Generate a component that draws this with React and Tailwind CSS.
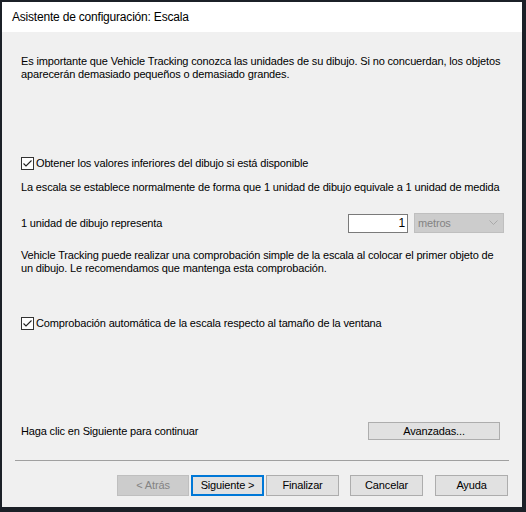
import React from "react";

function CheckBox({ label }) {
  return (
    <div className="flex items-center h-[13px]">
      <span className="w-[13px] h-[13px] border border-[#333333] bg-white flex items-center justify-center shrink-0">
        <svg width="11" height="11" viewBox="0 0 11 11">
          <path d="M1.5 5.5 L4 8 L9.5 2.5" fill="none" stroke="#222222" strokeWidth="1.1" />
        </svg>
      </span>
      <span className="ml-[2px]">{label}</span>
    </div>
  );
}

function Btn({ children, variant = "normal", className = "" }) {
  const styles = {
    normal: "bg-[#e1e1e1] border border-[#adadad] text-black",
    primary: "bg-[#e1e1e1] border-2 border-[#0078d7] text-black",
    disabled: "bg-[#cccccc] border border-[#bfbfbf] text-[#838383]",
  };
  return (
    <div className={`shrink-0 flex items-center justify-center ${styles[variant]} ${className}`}>
      {children}
    </div>
  );
}

export default function App() {
  return (
    <div className="w-[526px] h-[512px] bg-[#1b2027] pl-[2px] pt-[2px] overflow-hidden font-['Liberation_Sans',Arial,sans-serif] text-[11px] tracking-[-0.15px] leading-[13px] text-black whitespace-nowrap">
      <div className="w-[520px] h-[505px] bg-[#f0f0f0] flex flex-col">
        {/* title bar */}
        <div className="shrink-0 h-[30px] bg-white flex items-center pl-[10px] text-[12px] tracking-[-0.2px] text-black">
          Asistente de configuración: Escala
        </div>

        <div className="shrink-0 flex flex-col pl-[19px] pr-[14px] pt-[23px]">
          <p>
            Es importante que Vehicle Tracking conozca las unidades de su dibujo. Si no concuerdan, los objetos
            <br />
            aparecerán demasiado pequeños o demasiado grandes.
          </p>

          <div className="mt-[76px]">
            <CheckBox label="Obtener los valores inferiores del dibujo si está disponible" />
          </div>

          <p className="mt-[11px]">
            La escala se establece normalmente de forma que 1 unidad de dibujo equivale a 1 unidad de medida
          </p>

          <div className="mt-[19px] h-[20px] pr-[4px] flex items-center">
            <span className="flex-1">1 unidad de dibujo representa</span>
            <div className="w-[60px] h-[19px] border border-[#7a7a7a] bg-white flex items-center justify-end pr-[2px] text-[12px]">
              1
            </div>
            <div className="ml-[6px] w-[90px] h-[20px] border border-[#bfbfbf] bg-[#cccccc] flex items-center justify-between pl-[3px] pr-[5px] text-[#838383]">
              <span>metros</span>
              <svg width="9" height="6" viewBox="0 0 9 6">
                <path d="M0.5 0.5 L4.5 4.5 L8.5 0.5" fill="none" stroke="#a9a9a9" strokeWidth="1" />
              </svg>
            </div>
          </div>

          <p className="mt-[16px]">
            Vehicle Tracking puede realizar una comprobación simple de la escala al colocar el primer objeto de
            <br />
            un dibujo. Le recomendamos que mantenga esta comprobación.
          </p>

          <div className="mt-[42px]">
            <CheckBox label="Comprobación automática de la escala respecto al tamaño de la ventana" />
          </div>

          <div className="mt-[92px] h-[18px] flex items-center justify-between pr-[8px]">
            <span>Haga clic en Siguiente para continuar</span>
            <Btn className="w-[132px] h-[18px]">Avanzadas...</Btn>
          </div>
        </div>

        <div className="shrink-0 mx-[13px] mt-[20px] h-px bg-[#a0a0a0]" />

        <div className="shrink-0 mt-[14px] pr-[14px] flex justify-end">
          <Btn variant="disabled" className="w-[72px] h-[21px]">&lt; Atrás</Btn>
          <Btn variant="primary" className="ml-[2px] w-[73px] h-[21px]">Siguiente &gt;</Btn>
          <Btn className="ml-[2px] w-[73px] h-[21px]">Finalizar</Btn>
          <Btn className="ml-[11px] w-[73px] h-[21px]">Cancelar</Btn>
          <Btn className="ml-[12px] w-[73px] h-[21px]">Ayuda</Btn>
        </div>
      </div>
    </div>
  );
}
